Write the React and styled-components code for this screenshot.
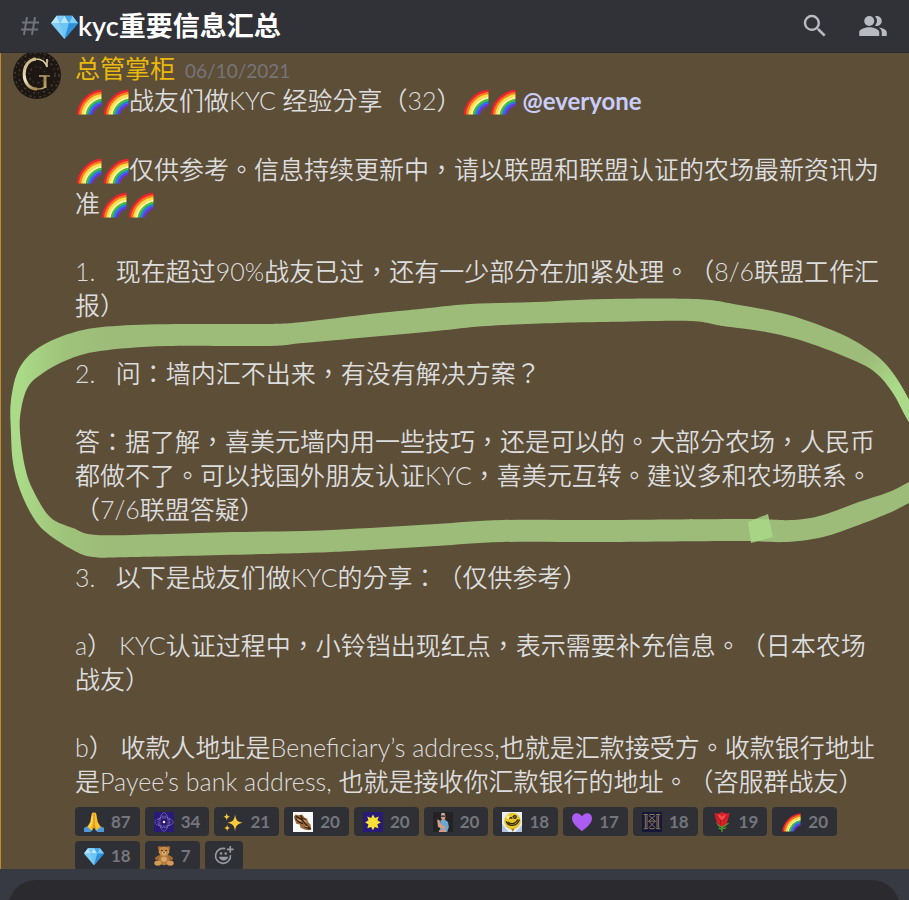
import React from "react";
import styled, { createGlobalStyle } from "styled-components";
import { MdSearch, MdPeopleAlt } from "react-icons/md";

const GlobalStyle = createGlobalStyle`
  * {
    box-sizing: border-box;
  }

  body {
    margin: 0;
    background-color: #373a42;
    color: #dcddde;
    font-family: Lato, "Noto Sans CJK TC", "Noto Sans CJK SC", sans-serif;
    text-spacing-trim: space-all;
  }

  p,
  h1,
  h2 {
    margin: 0;
  }

  button {
    border: none;
    padding: 0;
    font-family: inherit;
    cursor: pointer;
  }
`;

const Container = styled.div`
  display: flex;
  flex-direction: column;
  width: 100%;
  height: 100vh;
`;

const Header = styled.header`
  display: flex;
  align-items: center;
  flex-shrink: 0;
  height: 53px;
  padding: 0 21px;
  background-color: #313238;
  border-bottom: 1px solid #2b2a2d;
`;

const Channel = styled.div`
  display: flex;
  align-items: center;
  flex: 1;
  gap: 12px;
`;

const Title = styled.h1`
  display: flex;
  align-items: center;
  font-size: 27px;
  line-height: 40px;
  font-weight: 600;
  color: #ffffff;
`;

const Actions = styled.div`
  display: flex;
  gap: 28px;
`;

const IconButton = styled.button`
  display: flex;
  background: none;
  font-size: 30px;
  color: #b9bbc2;
`;

const Messages = styled.main`
  position: relative;
  flex: 1;
  min-height: 0;
  overflow: hidden;
  background-color: #5d4e38;
  border-left: 1px solid #c08a2c;
`;

const Message = styled.article`
  display: flex;
  gap: 14px;
  padding: 0 22px 0 12px;
`;

const Avatar = styled.svg`
  flex-shrink: 0;
  width: 48px;
  height: 48px;
  margin-top: -2px;
`;

const Body = styled.div`
  flex: 1;
  min-width: 0;
`;

const Author = styled.div`
  display: flex;
  align-items: baseline;
  gap: 10px;
  height: 30px;
  line-height: 30px;
`;

const Name = styled.h2`
  font-size: 25px;
  font-weight: 400;
  color: #e9b90c;
`;

const Time = styled.time`
  font-size: 19px;
  font-weight: 400;
  color: #76757a;
`;

const Content = styled.div`
  display: flex;
  flex-direction: column;
  gap: 34px;
  font-size: 25px;
  line-height: 34px;
  font-weight: 350;
`;

const Mention = styled.span`
  font-size: 24px;
  font-weight: 700;
  color: #c9cdfb;
`;

const Emoji = styled.svg`
  width: ${(props) => props.$size}px;
  height: ${(props) => props.$size}px;
  flex-shrink: 0;
  margin: -4px 0;
  vertical-align: -1px;
`;

const Reactions = styled.div`
  display: flex;
  flex-wrap: wrap;
  gap: 5px;
  margin-top: 9px;
`;

const Reaction = styled.button`
  display: flex;
  align-items: center;
  gap: 7px;
  height: 29px;
  padding: 0 9px;
  border-radius: 4px;
  background-color: #2f3036;
  font-size: 17px;
  line-height: 29px;
  font-weight: 700;
  color: #74767d;
`;

const Marker = styled.svg`
  position: absolute;
  top: 0;
  left: -1px;
  width: 909px;
  height: 816px;
  pointer-events: none;
`;

const Footer = styled.footer`
  flex-shrink: 0;
  height: 31px;
  padding: 11px 9px 0 8px;
  overflow: hidden;
  background-color: #373a42;
`;

const MessageInput = styled.input`
  display: block;
  width: 100%;
  height: 60px;
  padding: 0 24px;
  border: none;
  border-radius: 28px;
  background-color: #2b2b2f;
  color: #dcddde;
  font-size: 25px;
`;

const RAINBOW = ["#ee2230", "#fb7a1e", "#fde047", "#fdf3a0", "#3fc23c", "#2b7be8", "#6a35dc"];

const drawings = {
  rainbow: (
    <g fill="none" strokeWidth="2.300">
      <clipPath id="sky">
        <path d="M0 0h23.500v23.500H0z" />
      </clipPath>
      <g clipPath="url(#sky)">
        {RAINBOW.map((color, i) => (
          <circle key={color} cx="26" cy="26" r={23.5 - i * 2} stroke={color} />
        ))}
      </g>
    </g>
  ),
  gem: (
    <g>
      <path fill="#4db4ee" d="M5 2.500h14l5 6.500-12 14L0 9z" />
      <path fill="#b9e6fb" d="M5 2.500l3 6.500H0zM12 2.500l4 6.500H8z" />
      <path fill="#7fcdf6" d="M5 2.500h7L8 9zM19 2.500L16 9h8z" />
      <path fill="#4aa5e8" d="M12 2.500h7L16 9z" />
      <path fill="#6cc6f5" d="M8 9h8l-4 14z" />
      <path fill="#2f8fdb" d="M16 9h8L12 23z" />
      <path fill="#a4dcf8" d="M0 9h8l4 14z" opacity="0.6" />
    </g>
  ),
  pray: (
    <g>
      <path fill="#4f97d8" d="M0 19l7-3 4 5-3 3H0zM24 19l-7-3-4 5 3 3h8z" />
      <path
        fill="#fbc02d"
        d="M11.800 1C10 0 9 2 8.800 5L7.500 12 4 18l5 4 3-3 3 3 5-4-3.500-6L15.200 5C15 2 14 0 12.200 1z"
      />
      <path stroke="#c47d12" strokeWidth="1" fill="none" d="M12 2v14l-2 4M12 16l2 4" />
      <path stroke="#fde27a" strokeWidth="1.200" fill="none" d="M10 5l-1 8-3 5" />
    </g>
  ),
  atom: (
    <g>
      <path fill="#2a1a78" d="M0 0h24v24H0z" />
      <g fill="none" stroke="#8f84c4" strokeWidth="1" strokeDasharray="2 1">
        <ellipse cx="12" cy="12" rx="11" ry="5" />
        <ellipse cx="12" cy="12" rx="5" ry="11" />
        <circle cx="12" cy="12" r="7" />
      </g>
      <circle cx="12" cy="12" r="1.500" fill="#ffe9a8" />
    </g>
  ),
  sparkles: (
    <g fill="#fbc93a">
      <path d="M14.500 3c1 7 2.500 8.500 9 10-6.500 1.500-8 3-9 10-1-7-2.500-8.500-9-10 6.500-1.500 8-3 9-10z" />
      <path d="M4.500 1c.5 3.500 1 4 4 4.800-3 .8-3.500 1.500-4 4.700C4 7.300 3.500 6.600.5 5.800 3.500 5 4 4.500 4.500 1z" />
      <path d="M5 15c.4 3 1 3.500 3.500 4.200C6 20 5.400 20.500 5 23.500c-.4-3-1-3.500-3.500-4.300C4 18.500 4.600 18 5 15z" />
    </g>
  ),
  moth: (
    <g>
      <path fill="#fafafa" d="M0 0h24v24H0z" />
      <path fill="#9a6a3c" d="M1 6l2-3 4 1 4-1 3 4 3 1 1 4 3 3 1 6-4 1-4-1-5-2-1-4-4-1-2-5z" />
      <path stroke="#2e1c10" strokeWidth="1.500" fill="none" d="M3 5l6 3 5 5 7 8M3 8l4 4 5 2M9 4l2 4 4 1M14 18l6 2" />
      <path stroke="#dcb07a" strokeWidth="1.200" fill="none" d="M5 9l5 2M13 9l3 4M15 17l3 1" />
    </g>
  ),
  sun: (
    <g>
      <path fill="#2a1a78" d="M0 0h24v24H0z" />
      <path
        fill="#fde035"
        d="M12 3l2.300 4.200L19 5.500l-1.700 4.400 4.200 2.600-4.300 2.200 1.300 4.800-4.400-1.400L12 22l-2.300-4-4.500 1.500 1.300-4.800-4-2.200 4.100-2.600L5 5.500l4.700 1.700z"
      />
    </g>
  ),
  man: (
    <g>
      <path fill="#232325" d="M0 0h24v24H0z" />
      <path fill="#6ba8cc" d="M9 10l5-1 4 3 1 6-2 6H9l-1-7z" />
      <path fill="#d69b80" d="M9.500 3.500C10 1 15 1 15 4.500L14.500 9 11 10 9.500 7z" />
      <path fill="#d69b80" d="M5 9l3 1 1 4 6 4-1 3-8-3zM7 22l8-1 1 3H7z" />
      <path stroke="#25262c" strokeWidth="1.500" d="M9.500 5h5.500" />
      <path stroke="#e7e9ee" strokeWidth="1" d="M10 2h4" />
    </g>
  ),
  smiley: (
    <g>
      <path fill="#e8eef5" d="M0 0h24v24H0z" />
      <path fill="#b3c7e2" d="M0 14l8 10H0zM24 16v8h-8z" />
      <circle cx="12.500" cy="11" r="10" fill="#e6c62c" />
      <path fill="#a97d15" d="M11 20h4l-2 4z" />
      <path fill="none" stroke="#332a0b" strokeWidth="1.400" d="M5 11c2 7 13 7 16-2M7 12c3 3 9 3 12-3" />
      <path fill="none" stroke="#332a0b" strokeWidth="1.600" d="M9 8c1-2 3-1 3 0M13 6c1-2 4-2 4 0s-3 2-3 0" />
      <circle cx="7" cy="6" r="2" fill="#fff29b" />
    </g>
  ),
  heart: (
    <path
      fill="#ab5cf2"
      d="M12 23C7 19 0 14 0 7.500 0 1 8-1 12 5c4-6 12-4 12 2.500C24 14 17 19 12 23z"
    />
  ),
  seal: (
    <g>
      <path fill="#14163a" d="M0 0h24v24H0z" />
      <path
        fill="none"
        stroke="#8c7952"
        strokeWidth="1.200"
        d="M2 3h5M2 20h5M4 3v17M6 4v15M17 3h5M17 20h5M18 4v15M20 3v17M8 4l8 7-8 8M16 4l-8 7 8 8M9 3h6M9 20h6M8 11h8"
      />
    </g>
  ),
  rose: (
    <g>
      <path fill="none" stroke="#43a02c" strokeWidth="1.600" d="M12 15v9M12 21l-4-2M12 20l5-1" />
      <path fill="#4fa836" d="M4 12l4 5 4 2 4-2 5-4-5 1-8 1z" />
      <path fill="#d81f27" d="M3 1l4 1 5-2 5 2 4-1-1 5-2 7-4 4h-4l-4-4-2-7z" />
      <path fill="#f04747" d="M7 2l5 3 5-3-2 6-3 2-4-3z" />
      <path fill="none" stroke="#98121b" d="M5 4l5 6v5M18 5l-5 6" />
    </g>
  ),
  teddy: (
    <g>
      <ellipse cx="12" cy="16" rx="7" ry="7" fill="#b57b3b" />
      <circle cx="7" cy="2.500" r="2.500" fill="#a86d31" />
      <circle cx="17" cy="2.500" r="2.500" fill="#a86d31" />
      <ellipse cx="12" cy="6.500" rx="6.500" ry="5.800" fill="#c88c48" />
      <ellipse cx="4.500" cy="20.500" rx="4.200" ry="3.200" fill="#d39a55" />
      <ellipse cx="19.500" cy="20.500" rx="4.200" ry="3.200" fill="#d39a55" />
      <path stroke="#a86d31" strokeWidth="3.500" strokeLinecap="round" d="M6 13l-3 2M18 13l3 2" />
      <ellipse cx="12" cy="8.500" rx="2.600" ry="2" fill="#eac48b" />
      <ellipse cx="12" cy="16" rx="3.500" ry="3" fill="#d9a765" />
      <g fill="#2b1a0c">
        <circle cx="9.500" cy="5.500" r="0.900" />
        <circle cx="14.500" cy="5.500" r="0.900" />
        <circle cx="12" cy="8" r="0.900" />
      </g>
    </g>
  ),
  add: (
    <g fill="none" stroke="#989aa1" strokeWidth="2">
      <path d="M13.500 3.200A9 9 0 1 0 19.800 11" />
      <path d="M19.500 0v8M15.500 4h8" />
      <path fill="#989aa1" stroke="none" d="M6 13h11c-1 6-10 6-11 0z" />
      <g fill="#989aa1" stroke="none">
        <circle cx="8.500" cy="9" r="1.500" />
        <circle cx="14" cy="9" r="1.500" />
      </g>
    </g>
  ),
};

const Icon = ({ name, size = 20 }) => (
  <Emoji $size={size} viewBox="0 0 24 24" role="img" aria-label={name}>
    {drawings[name]}
  </Emoji>
);

const Rainbows = () => (
  <>
    <Icon name="rainbow" size={27} />
    <Icon name="rainbow" size={27} />
  </>
);

// closed smooth curve through a list of points
const smooth = (points) => {
  const n = points.length;
  let d = `M${points[0].join(" ")}`;

  for (let i = 0; i < n; i++) {
    const [p0, p1, p2, p3] = [-1, 0, 1, 2].map((k) => points[(i + k + n) % n]);
    const c1 = [0, 1].map((k) => p1[k] + (p2[k] - p0[k]) / 6);
    const c2 = [0, 1].map((k) => p2[k] - (p3[k] - p1[k]) / 6);
    d += `C${c1.join(" ")} ${c2.join(" ")} ${p2.join(" ")}`;
  }

  return `${d}Z`;
};

const STROKE = [
  [11, 400], [20, 367], [43, 345], [83, 330], [133, 325], [200, 324], [267, 324], [303, 322],
  [370, 314], [420, 309], [470, 304], [536, 302], [606, 299], [696, 299], [739, 305], [789, 315],
  [839, 333], [869, 350], [889, 368], [909, 400], [925, 440], [909, 422], [893, 393], [876, 373],
  [853, 360], [806, 342], [766, 332], [723, 326], [689, 321], [606, 322], [556, 323], [486, 326],
  [436, 331], [370, 337], [303, 343], [267, 346], [167, 346], [100, 351], [67, 360], [43, 373],
  [28, 387], [21, 410], [20, 433], [25, 467], [33, 490], [50, 517], [73, 528], [97, 535],
  [167, 534], [233, 532], [303, 531], [370, 528], [436, 524], [503, 520], [606, 520], [746, 519],
  [793, 520], [823, 515], [856, 503], [889, 492], [909, 482], [930, 470], [930, 492], [909, 503],
  [889, 513], [856, 526], [823, 537], [786, 542], [733, 541], [606, 542], [503, 542], [436, 546],
  [370, 550], [303, 553], [133, 557], [93, 557], [73, 550], [47, 533], [33, 517], [20, 490],
  [13, 463], [11, 433],
];

const reactions = [
  ["pray", 87],
  ["atom", 34],
  ["sparkles", 21],
  ["moth", 20],
  ["sun", 20],
  ["man", 20],
  ["smiley", 18],
  ["heart", 17],
  ["seal", 18],
  ["rose", 19],
  ["rainbow", 20],
  ["gem", 18],
  ["teddy", 7],
];

const App = () => {
  return (
    <Container>
      <GlobalStyle />
      <Header>
        <Channel>
          <svg width="18" height="18" viewBox="0 0 18 18" fill="none" stroke="#70737b" strokeWidth="2">
            <path d="M6 0L3 18M14 0l-3 18M1 5.500h17M0 12.500h17" />
          </svg>
          <Title>
            <Icon name="gem" size={27} />
            kyc重要信息汇总
          </Title>
        </Channel>
        <Actions>
          <IconButton aria-label="Search">
            <MdSearch />
          </IconButton>
          <IconButton aria-label="Members">
            <MdPeopleAlt />
          </IconButton>
        </Actions>
      </Header>

      <Messages>
        <Message>
          <Avatar viewBox="0 0 48 48">
            <defs>
              <linearGradient id="gold" gradientUnits="userSpaceOnUse" x1="10" y1="7" x2="38" y2="40">
                <stop offset="0" stopColor="#b39a63" />
                <stop offset="0.4" stopColor="#f3e6c0" />
                <stop offset="0.7" stopColor="#a58850" />
                <stop offset="1" stopColor="#d9c48c" />
              </linearGradient>
            </defs>
            <circle cx="24" cy="24" r="24" fill="#1c1712" />
            <g fill="none" stroke="#4a3f31" strokeWidth="1.500" strokeDasharray="2 4 1 3">
              <circle cx="24" cy="24" r="22" />
              <circle cx="24" cy="24" r="18" />
              <circle cx="24" cy="24" r="8" />
            </g>
            <g fill="none" stroke="url(#gold)">
              <path strokeWidth="1.500" d="M34 16C32 9 27 8 23 8" />
              <path strokeWidth="3" d="M23 8C7 9 7 38 24 38" />
              <path strokeWidth="1.500" d="M24 38c4 0 7-1 8-2M34 8v8M26 25h11" />
              <path strokeWidth="3" d="M32 25v12" />
            </g>
          </Avatar>
          <Body>
            <Author>
              <Name>总管掌柜</Name>
              <Time dateTime="2021-06-10">06/10/2021</Time>
            </Author>
            <Content lang="zh-Hant">
              <p>
                <Rainbows />
                战友们做KYC 经验分享（32）
                <Rainbows /> <Mention>@everyone</Mention>
              </p>
              <p>
                <Rainbows />
                仅供参考。信息持续更新中，请以联盟和联盟认证的农场最新资讯为准
                <Rainbows />
              </p>
              <p>1.{"\u00a0\u00a0 "}现在超过90%战友已过，还有一少部分在加紧处理。（8/6联盟工作汇报）</p>
              <p>2.{"\u00a0\u00a0 "}问：墙内汇不出来，有没有解决方案？</p>
              <p>
                答：据了解，喜美元墙内用一些技巧，还是可以的。大部分农场，人民币都做不了。可以找国外朋友认证KYC，喜美元互转。建议多和农场联系。（7/6联盟答疑）
              </p>
              <p>3.{"\u00a0\u00a0 "}以下是战友们做KYC的分享：（仅供参考）</p>
              <p>a） KYC认证过程中，小铃铛出现红点，表示需要补充信息。（日本农场战友）</p>
              <p>
                b） 收款人地址是Beneficiary’s address,也就是汇款接受方。收款银行地址是Payee’s bank
                address, 也就是接收你汇款银行的地址。（咨服群战友）
              </p>
            </Content>
            <Reactions>
              {reactions.map(([name, count]) => (
                <Reaction key={name}>
                  <Icon name={name} />
                  {count}
                </Reaction>
              ))}
              <Reaction aria-label="Add reaction">
                <Icon name="add" />
              </Reaction>
            </Reactions>
          </Body>
        </Message>

        <Marker viewBox="0 53 909 816" aria-hidden="true">
          <defs>
            <linearGradient id="ink" gradientUnits="userSpaceOnUse" x1="0" y1="0" x2="909" y2="0">
              <stop offset="0.02" stopColor="#abdb88" />
              <stop offset="0.07" stopColor="#9fc37b" />
              <stop offset="0.12" stopColor="#9dbb79" />
              <stop offset="1" stopColor="#9dbb79" />
            </linearGradient>
            <radialGradient id="tip" gradientUnits="userSpaceOnUse" cx="909" cy="400" r="60">
              <stop offset="0.3" stopColor="#abdb88" />
              <stop offset="1" stopColor="#abdb88" stopOpacity="0" />
            </radialGradient>
          </defs>
          <path d={smooth(STROKE)} fill="url(#ink)" />
          <path d={smooth(STROKE)} fill="url(#tip)" />
          <path fill="#abdb88" opacity="0.800" d="M748 522l20-8 5 23-22 6z" />
        </Marker>
      </Messages>

      <Footer>
        <MessageInput aria-label="Message" />
      </Footer>
    </Container>
  );
};

export default App;
